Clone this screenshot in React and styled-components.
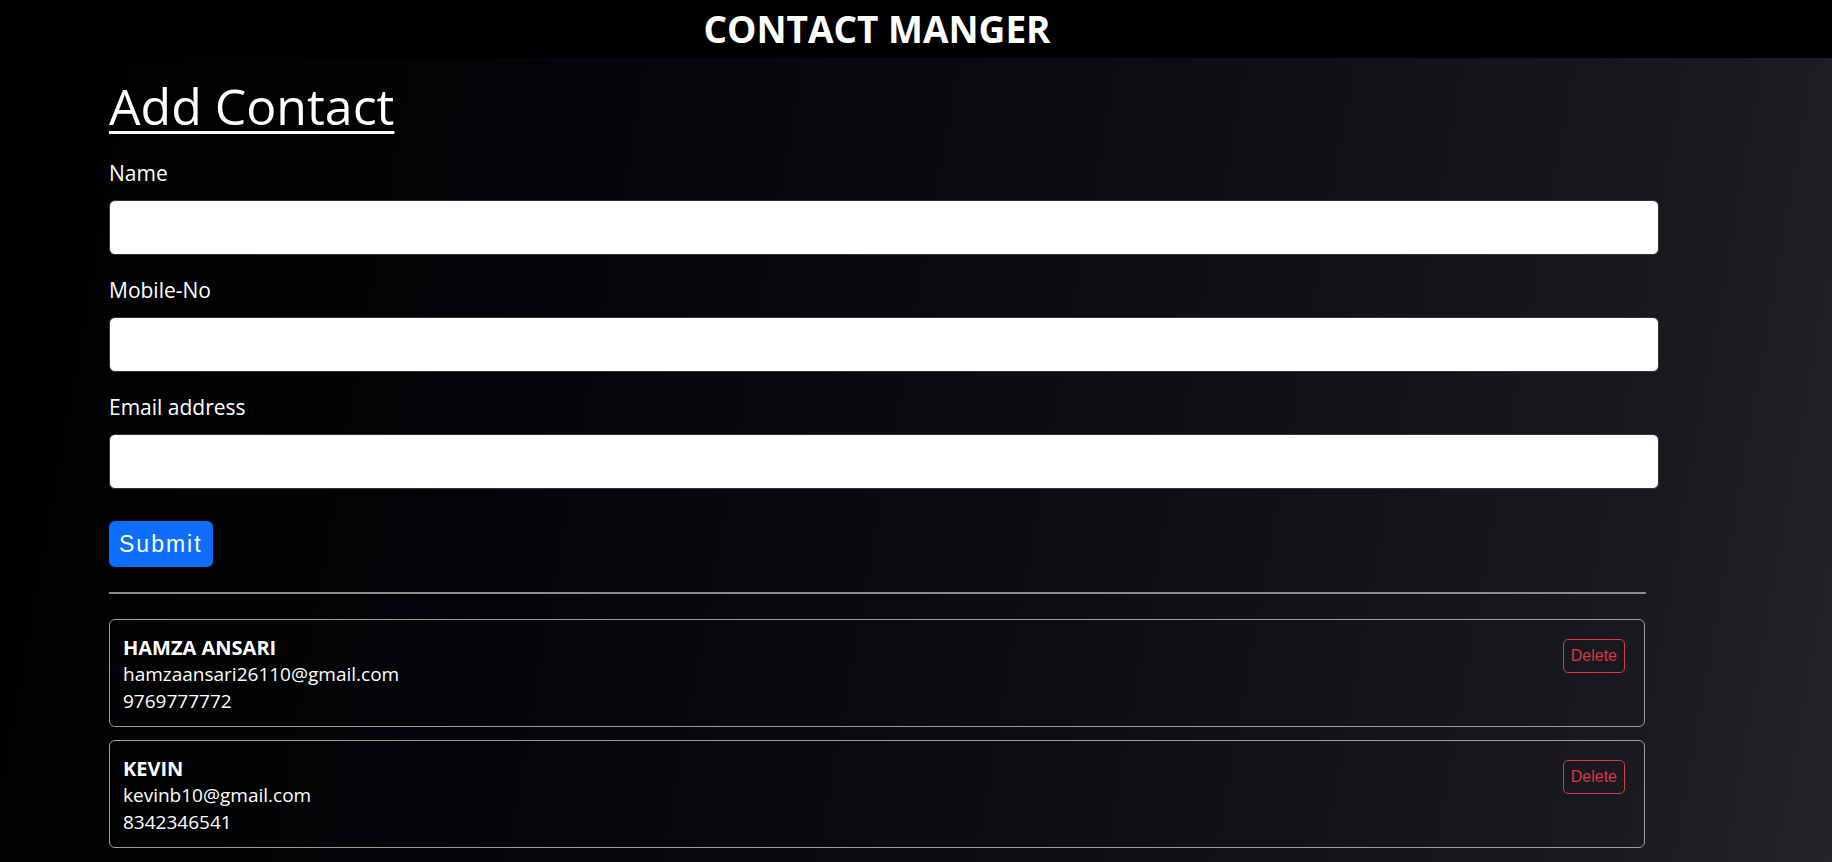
import { useState } from 'react';
import styled, { createGlobalStyle } from 'styled-components';

const GlobalStyle = createGlobalStyle`
  * {
    box-sizing: border-box;
  }
  body {
    margin: 0;
    font-family: "Open Sans", "Noto Sans", sans-serif;
    color: #fff;
    background: #000;
  }
`;

const initialContacts = [
  { id: 1, name: 'HAMZA ANSARI', email: 'hamzaansari26110@gmail.com', mobile: '9769777772' },
  { id: 2, name: 'KEVIN', email: 'kevinb10@gmail.com', mobile: '8342346541' },
];

const App = () => {
  const [contacts, setContacts] = useState(initialContacts);
  const [name, setName] = useState('');
  const [mobile, setMobile] = useState('');
  const [email, setEmail] = useState('');

  const handleSubmit = (e) => {
    e.preventDefault();
    if (!name) return;
    setContacts([...contacts, { id: Date.now(), name: name.toUpperCase(), email, mobile }]);
    setName('');
    setMobile('');
    setEmail('');
  };

  const handleDelete = (id) => {
    setContacts(contacts.filter((c) => c.id !== id));
  };

  return (
    <Page>
      <GlobalStyle />
      <Header>
        <HeaderTitle>CONTACT MANGER</HeaderTitle>
      </Header>
      <Main>
        <Title>Add Contact</Title>
        <form onSubmit={handleSubmit}>
          <Field>
            <Label>Name</Label>
            <Input type="text" value={name} onChange={(e) => setName(e.target.value)} />
          </Field>
          <Field>
            <Label>Mobile-No</Label>
            <Input type="text" value={mobile} onChange={(e) => setMobile(e.target.value)} />
          </Field>
          <Field>
            <Label>Email address</Label>
            <Input type="email" value={email} onChange={(e) => setEmail(e.target.value)} />
          </Field>
          <SubmitButton type="submit">Submit</SubmitButton>
        </form>
        <Divider />
        <ContactList>
          {contacts.map((c) => (
            <ContactCard key={c.id}>
              <ContactInfo>
                <ContactName>{c.name}</ContactName>
                <ContactLine>{c.email}</ContactLine>
                <ContactLine>{c.mobile}</ContactLine>
              </ContactInfo>
              <DeleteButton onClick={() => handleDelete(c.id)}>Delete</DeleteButton>
            </ContactCard>
          ))}
        </ContactList>
      </Main>
    </Page>
  );
};

export default App;

const Page = styled.div`
  min-height: 100vh;
  background: linear-gradient(
    100deg,
    #000000 0%,
    #040508 30%,
    #0d0e13 60%,
    #191a1f 88%,
    #24252a 100%
  );
`;

const Header = styled.header`
  height: 58px;
  background: #000;
  display: flex;
  justify-content: center;
  padding-right: 78px;
`;

const HeaderTitle = styled.h2`
  margin: 0;
  font-size: 37px;
  line-height: 58px;
  font-weight: 700;
`;

const Main = styled.main`
  padding: 20px 0 20px 109px;
`;

const Title = styled.h1`
  margin: 0 0 25px;
  font-size: 50px;
  line-height: 56px;
  font-weight: 500;
  text-decoration: underline;
  text-decoration-thickness: 3px;
  text-underline-offset: 6px;
`;

const Field = styled.div`
  margin-bottom: 21px;
`;

const Label = styled.label`
  display: block;
  font-size: 21px;
  line-height: 29px;
  margin-bottom: 12px;
`;

const Input = styled.input`
  display: block;
  width: 1550px;
  height: 55px;
  border: 1px solid #333;
  border-radius: 6px;
  background: #fff;
  padding: 8px 16px;
  font-size: 18px;
  font-family: inherit;
  outline: none;
`;

const SubmitButton = styled.button`
  margin-top: 11px;
  height: 46px;
  padding: 0 10px;
  background: #0d6efd;
  color: #fff;
  border: none;
  border-radius: 6px;
  font-family: "Liberation Sans", Arial, sans-serif;
  font-size: 23px;
  letter-spacing: 2px;
  cursor: pointer;
`;

const Divider = styled.hr`
  width: 1537px;
  margin: 25px 0 25px;
  border: none;
  border-top: 2px solid #8c8c8c;
`;

const ContactList = styled.div`
  display: flex;
  flex-direction: column;
  gap: 13px;
  width: 1536px;
`;

const ContactCard = styled.div`
  display: flex;
  justify-content: space-between;
  align-items: flex-start;
  border: 1px solid #a39b97;
  border-radius: 6px;
  padding: 14px 19px 11px 13px;
`;

const ContactInfo = styled.div`
  display: flex;
  flex-direction: column;
`;

const ContactName = styled.div`
  font-size: 20px;
  line-height: 27px;
  font-weight: 700;
`;

const ContactLine = styled.div`
  font-size: 19px;
  line-height: 27px;
`;

const DeleteButton = styled.button`
  margin-top: 5px;
  padding: 5px 7px;
  line-height: 22px;
  background: transparent;
  color: #dc3545;
  border: 1px solid #dc3545;
  border-radius: 5px;
  font-family: "Liberation Sans", Arial, sans-serif;
  font-size: 16px;
  cursor: pointer;
`;
